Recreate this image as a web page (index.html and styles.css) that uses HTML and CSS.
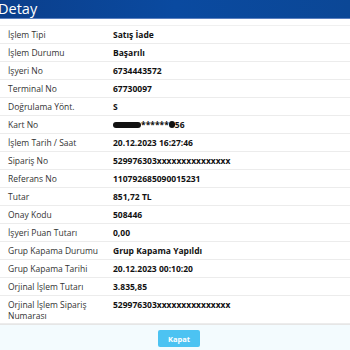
FILE: index.html
```html
<!DOCTYPE html>
<html lang="tr">
<head>
    <meta charset="UTF-8">
    <meta name="viewport" content="width=device-width, initial-scale=1.0">
    <title>Detay</title>
    <link rel="stylesheet" href="styles.css">
</head>
<body>
    <div class="baslik">Detay</div>

    <div class="detay">
        <div class="satir"><span class="etiket">İşlem Tipi</span><span class="deger">Satış İade</span></div>
        <div class="satir"><span class="etiket">İşlem Durumu</span><span class="deger">Başarılı</span></div>
        <div class="satir"><span class="etiket">İşyeri No</span><span class="deger">6734443572</span></div>
        <div class="satir"><span class="etiket">Terminal No</span><span class="deger">67730097</span></div>
        <div class="satir"><span class="etiket">Doğrulama Yönt.</span><span class="deger">S</span></div>
        <div class="satir"><span class="etiket">Kart No</span><span class="deger"><span class="karalama"></span>******<span class="karalama kucuk"></span>56</span></div>
        <div class="satir"><span class="etiket">İşlem Tarih / Saat</span><span class="deger">20.12.2023 16:27:46</span></div>
        <div class="satir"><span class="etiket">Sipariş No</span><span class="deger">529976303xxxxxxxxxxxxxxx</span></div>
        <div class="satir"><span class="etiket">Referans No</span><span class="deger">110792685090015231</span></div>
        <div class="satir"><span class="etiket">Tutar</span><span class="deger">851,72 TL</span></div>
        <div class="satir"><span class="etiket">Onay Kodu</span><span class="deger">508446</span></div>
        <div class="satir"><span class="etiket">İşyeri Puan Tutarı</span><span class="deger">0,00</span></div>
        <div class="satir"><span class="etiket">Grup Kapama Durumu</span><span class="deger">Grup Kapama Yapıldı</span></div>
        <div class="satir"><span class="etiket">Grup Kapama Tarihi</span><span class="deger">20.12.2023 00:10:20</span></div>
        <div class="satir"><span class="etiket">Orjinal İşlem Tutarı</span><span class="deger">3.835,85</span></div>
        <div class="satir uzun"><span class="etiket">Orjinal İşlem Sipariş Numarası</span><span class="deger">529976303xxxxxxxxxxxxxxx</span></div>
    </div>

    <div class="alt">
        <button type="button" class="kapat">Kapat</button>
    </div>
</body>
</html>
```

FILE: styles.css
```css
body {
    margin: 0;
    font-family: "Open Sans", "Noto Sans", sans-serif;
    background-color: white;
    color: #222;
}

.baslik {
    height: 19px;
    line-height: 17px;
    text-indent: -2px;
    font-size: 14.5px;
    color: white;
    background: linear-gradient(to right, #0b3f8c, #0a4aa0 50%, #0b4796);
    border-bottom: 1px solid #5a7fbf;
    box-sizing: border-box;
}

.detay {
    margin-top: 6px;
    border-top: 1px solid #f0f0f0;
}

.satir {
    display: flex;
    align-items: center;
    height: 18px;
    border-bottom: 1px solid #ececec;
    box-sizing: border-box;
    font-size: 8.5px;
}

.satir.uzun {
    height: 28px;
    align-items: flex-start;
    padding-top: 3px;
}

.etiket {
    width: 105px;
    padding-left: 8px;
    flex-shrink: 0;
    font-weight: 500;
    color: #333;
    line-height: 11px;
}

.uzun .etiket {
    width: 92px;
    margin-right: 13px;
}

.deger {
    font-weight: 700;
    color: #111;
    display: flex;
    align-items: center;
    line-height: 11px;
}

.karalama {
    display: inline-block;
    width: 28px;
    height: 6px;
    background: #111;
    border-radius: 3px;
}

.karalama.kucuk {
    width: 6px;
    height: 7px;
}

.alt {
    height: 27px;
    border-top: 1px solid #e6e6e6;
    background-color: #f3fbfe;
    display: flex;
    justify-content: center;
    align-items: center;
    padding-left: 8px;
}

.kapat {
    width: 42px;
    height: 17px;
    border: none;
    border-radius: 2px;
    background-color: #4cc3f2;
    color: white;
    font-family: "Open Sans", sans-serif;
    font-size: 7.5px;
    font-weight: 700;
    padding: 0;
}
```
